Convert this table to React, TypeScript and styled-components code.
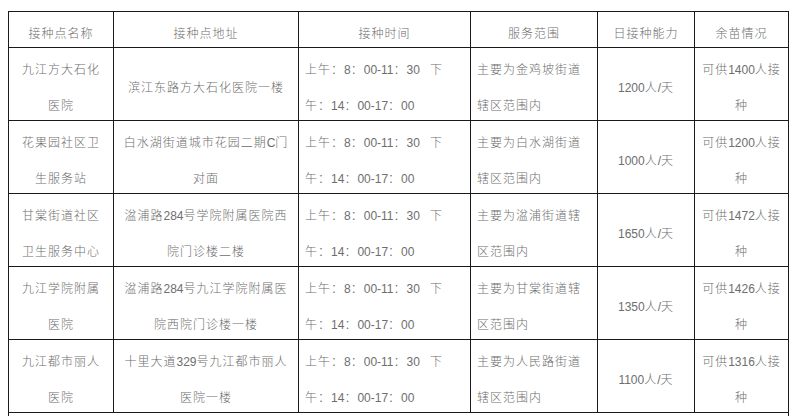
import React from 'react';
import styled, { createGlobalStyle } from 'styled-components';

const GlobalStyle = createGlobalStyle`
  html, body {
    margin: 0;
    padding: 0;
    background: #ffffff;
    overflow: hidden;
  }
  body {
    font-family: "Noto Sans CJK SC", "Liberation Sans", sans-serif;
  }
`;

const Page = styled.div`
  padding: 11px 0 0 8px;
  height: 416px;
  box-sizing: border-box;
`;

const Table = styled.table`
  border-collapse: collapse;
  table-layout: fixed;
  width: 780px;
  color: #6e6e6e;
  font-size: 12px;
  font-weight: 300;
  letter-spacing: 1px;
`;

const HeadCell = styled.th`
  border: 1px solid #1a1a1a;
  height: 36px;
  padding: 6px 0 0;
  box-sizing: border-box;
  font-weight: 300;
  text-align: center;
  vertical-align: middle;
  line-height: 20px;
`;

const Cell = styled.td<{ $align?: 'left' | 'center' }>`
  border: 1px solid #1a1a1a;
  height: 72px;
  padding: 0 0 0 ${(p) => (p.$align === 'left' ? '6px' : '0')};
  box-sizing: border-box;
  text-align: ${(p) => p.$align ?? 'center'};
  vertical-align: middle;
  white-space: pre;
`;

const Line = styled.div`
  height: 36px;
  padding-top: 5px;
  box-sizing: border-box;
  line-height: 31px;
`;

const Num = styled.span`
  font-family: "Liberation Sans", sans-serif;
  letter-spacing: 0;
  line-height: 1;
`;

const renderText = (s: string) =>
  s.split(/([0-9A-Za-z\-\/ ]+)/).map((part, i) =>
    i % 2 === 1 ? <Num key={i}>{part}</Num> : <React.Fragment key={i}>{part}</React.Fragment>
  );

const Lines = ({ lines }: { lines: string[] }) => (
  <>
    {lines.map((l, i) => (
      <Line key={i}>{renderText(l)}</Line>
    ))}
  </>
);

const TIME = ['上午：8：00-11：30   下', '午：14：00-17：00'];

const headers = ['接种点名称', '接种点地址', '接种时间', '服务范围', '日接种能力', '余苗情况'];
const widths = [105, 185, 172, 127, 97, 94];

const sites = [
  {
    name: ['九江方大石化', '医院'],
    address: ['滨江东路方大石化医院一楼'],
    scope: ['主要为金鸡坡街道', '辖区范围内'],
    capacity: '1200人/天',
    stock: ['可供1400人接', '种'],
  },
  {
    name: ['花果园社区卫', '生服务站'],
    address: ['白水湖街道城市花园二期C门', '对面'],
    scope: ['主要为白水湖街道', '辖区范围内'],
    capacity: '1000人/天',
    stock: ['可供1200人接', '种'],
  },
  {
    name: ['甘棠街道社区', '卫生服务中心'],
    address: ['湓浦路284号学院附属医院西', '院门诊楼二楼'],
    scope: ['主要为湓浦街道辖', '区范围内'],
    capacity: '1650人/天',
    stock: ['可供1472人接', '种'],
  },
  {
    name: ['九江学院附属', '医院'],
    address: ['湓浦路284号九江学院附属医', '院西院门诊楼一楼'],
    scope: ['主要为甘棠街道辖', '区范围内'],
    capacity: '1350人/天',
    stock: ['可供1426人接', '种'],
  },
  {
    name: ['九江都市丽人', '医院'],
    address: ['十里大道329号九江都市丽人', '医院一楼'],
    scope: ['主要为人民路街道', '辖区范围内'],
    capacity: '1100人/天',
    stock: ['可供1316人接', '种'],
  },
];

export default function App() {
  return (
    <Page>
      <GlobalStyle />
      <Table>
        <colgroup>
          {widths.map((w, i) => (
            <col key={i} style={{ width: w }} />
          ))}
        </colgroup>
        <thead>
          <tr>
            {headers.map((h) => (
              <HeadCell key={h}>{h}</HeadCell>
            ))}
          </tr>
        </thead>
        <tbody>
          {sites.map((s) => (
            <tr key={s.name.join('')}>
              <Cell>
                <Lines lines={s.name} />
              </Cell>
              <Cell>
                <Lines lines={s.address} />
              </Cell>
              <Cell $align="left">
                <Lines lines={TIME} />
              </Cell>
              <Cell $align="left">
                <Lines lines={s.scope} />
              </Cell>
              <Cell>
                <Lines lines={[s.capacity]} />
              </Cell>
              <Cell>
                <Lines lines={s.stock} />
              </Cell>
            </tr>
          ))}
          <tr>
            <Cell colSpan={6} />
          </tr>
        </tbody>
      </Table>
    </Page>
  );
}
